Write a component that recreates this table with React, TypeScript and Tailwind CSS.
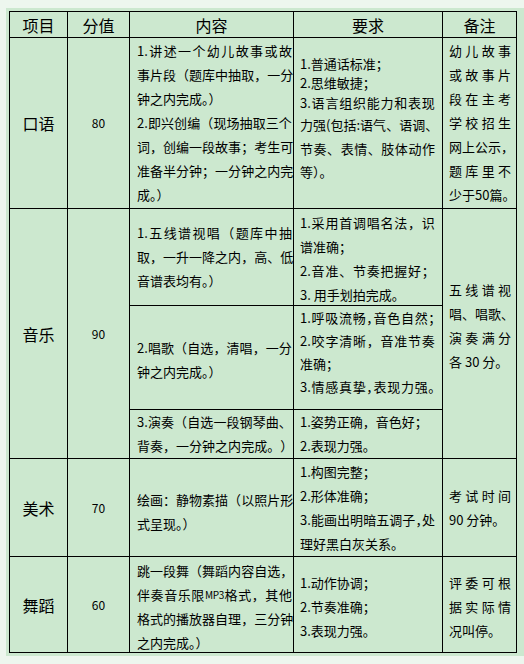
import React from 'react';

type Ln = { t: string; j?: boolean; h?: number };

const HC: Record<number, string> = {
  19: 'h-[19px] leading-[19px]',
  21: 'h-[21px] leading-[21px]',
  23: 'h-[23px] leading-[23px]',
  24: 'h-[24px] leading-[24px]',
};

const j = (t: string, h?: number): Ln => ({ t, j: true, h });
const n = (t: string, h?: number): Ln => ({ t, h });

function tokens(s: string): string[] {
  const out: string[] = [];
  let buf = '';
  for (const ch of Array.from(s)) {
    if (ch === ' ') {
      if (buf) {
        out.push(buf);
        buf = '';
      }
      continue;
    }
    if (/[0-9A-Za-z.]/.test(ch)) {
      buf += ch;
      continue;
    }
    if (buf) {
      out.push(buf);
      buf = '';
    }
    out.push(ch);
  }
  if (buf) out.push(buf);
  return out;
}

const PUNCT = /[，。；、：（）]/;

function est(s: string, halt: boolean): number {
  let w = 0;
  for (const ch of Array.from(s)) {
    if (ch === ' ') continue;
    if (/[0-9]/.test(ch)) w += 7.2;
    else if (/[A-Z]/.test(ch)) w += 6.5;
    else if (ch === '.') w += 3.5;
    else if (ch === '(' || ch === ':') w += 4;
    else if (halt && PUNCT.test(ch)) w += 6.5;
    else w += 13;
  }
  return w;
}

function Line({ ln, w }: { ln: Ln; w: number }) {
  const hc = HC[ln.h ?? 24];
  if (ln.j) {
    const halt = est(ln.t, false) > w + 3;
    const tight = halt && est(ln.t, true) > w;
    const fx = halt
      ? tight
        ? "[font-feature-settings:'halt'] tracking-[-0.6px]"
        : "[font-feature-settings:'halt']"
      : '';
    return (
      <div className={`flex justify-between whitespace-nowrap ${fx} ${hc}`}>
        {tokens(ln.t).map((tk, i) => (
          <span key={i} className={/[A-Z]/.test(tk) ? 'text-[10px] tracking-[-0.3px]' : ''}>
            {tk}
          </span>
        ))}
      </div>
    );
  }
  return <div className={`whitespace-pre ${hc}`}>{ln.t}</div>;
}

function Cell({ lines, cls, w }: { lines: Ln[]; cls: string; w: number }) {
  return (
    <div className={`border-l border-t border-black flex flex-col ${cls}`}>
      {lines.map((ln, i) => (
        <Line key={i} ln={ln} w={w} />
      ))}
    </div>
  );
}

function Head({ t }: { t: string }) {
  return (
    <div className="border-l border-t border-black flex items-center justify-center text-[16px]">{t}</div>
  );
}

function Label({ t, cls = '' }: { t: string; cls?: string }) {
  return (
    <div className={`border-l border-t border-black flex items-center justify-center text-[16px] ${cls}`}>{t}</div>
  );
}

function Score({ t, cls = '' }: { t: string; cls?: string }) {
  return (
    <div className={`border-l border-t border-black flex items-center justify-center text-[12px] ${cls}`}>{t}</div>
  );
}

const C3 = 'pl-[7px] pr-[1px]';
const C4 = 'pl-[6px] pr-[7px]';
const C5 = 'pl-[6px] pr-[5px]';
const W3 = 155;
const W4 = 135;
const W5 = 62;

export default function App() {
  return (
    <div className="w-[524px] h-[664px] bg-[#edf6ee] pt-[8px] pl-[6px] text-black font-['Noto_Sans_CJK_SC','Noto_Sans',sans-serif]">
      <div className="w-[518px] h-[648px] bg-[#cce8cf] p-[3px]">
        <div className="w-[508px] grid grid-cols-[58px_62px_164px_149px_74px] grid-rows-[26px_171px_97px_104px_49px_98px_96px] border-r border-b border-black text-[13px]">
          <Head t="项目" />
          <Head t="分值" />
          <Head t="内容" />
          <Head t="要求" />
          <Head t="备注" />

          {/* 口语 */}
          <Label t="口语" />
          <Score t="80" />
          <Cell
            w={W3}
            cls={`justify-center ${C3}`}
            lines={[
              j('1.讲述一个幼儿故事或故'),
              j('事片段（题库中抽取，一分'),
              n('钟之内完成。）'),
              j('2.即兴创编（现场抽取三个'),
              j('词，创编一段故事；考生可'),
              j('准备半分钟；一分钟之内完'),
              n('成。）'),
            ]}
          />
          <Cell
            w={W4}
            cls={`justify-start pt-[16px] ${C4}`}
            lines={[
              n('1.普通话标准；', 19),
              n('2.思维敏捷；', 19),
              j('3.语言组织能力和表现', 21),
              j('力强(包括:语气、语调、'),
              j('节奏、表情、肢体动作', 23),
              n('等）。', 23),
            ]}
          />
          <Cell
            w={W5}
            cls={`justify-center ${C5}`}
            lines={[
              j('幼儿故事'),
              j('或故事片'),
              j('段在主考'),
              j('学校招生'),
              n('网上公示，'),
              j('题库里不'),
              n('少于50篇。'),
            ]}
          />

          {/* 音乐 */}
          <Label t="音乐" cls="row-span-3" />
          <Score t="90" cls="row-span-3" />
          <Cell
            w={W3}
            cls={`justify-center ${C3}`}
            lines={[j('1.五线谱视唱（题库中抽'), j('取，一升一降之内，高、低'), n('音谱表均有。）')]}
          />
          <Cell
            w={W4}
            cls={`justify-center pt-[4px] ${C4}`}
            lines={[j('1. 采用首调唱名法，识'), n('谱准确；'), j('2. 音准、节奏把握好；'), n('3. 用手划拍完成。')]}
          />
          <Cell
            w={W5}
            cls={`row-span-3 justify-center pb-[16px] ${C5}`}
            lines={[j('五线谱视'), n('唱、唱歌、'), j('演奏满分'), n('各 30 分。')]}
          />
          <Cell
            w={W3}
            cls={`justify-center pt-[4px] ${C3}`}
            lines={[j('2.唱歌（自选，清唱，一分'), n('钟之内完成。）')]}
          />
          <Cell
            w={W4}
            cls={`justify-start ${C4}`}
            lines={[
              j('1. 呼吸流畅，音色自然；', 23),
              j('2. 咬字清晰，音准节奏', 23),
              n('准确；', 23),
              j('3. 情感真挚，表现力强。', 23),
            ]}
          />
          <Cell
            w={W3}
            cls={`justify-center ${C3}`}
            lines={[j('3.演奏（自选一段钢琴曲、'), j('背奏，一分钟之内完成。）')]}
          />
          <Cell w={W4} cls={`justify-center ${C4}`} lines={[n('1.姿势正确，音色好；'), n('2.表现力强。')]} />

          {/* 美术 */}
          <Label t="美术" />
          <Score t="70" />
          <Cell
            w={W3}
            cls={`justify-center pt-[8px] ${C3}`}
            lines={[j('绘画：静物素描（以照片形'), n('式呈现。）')]}
          />
          <Cell
            w={W4}
            cls={`justify-center ${C4}`}
            lines={[n('1.构图完整；'), n('2.形体准确；'), j('3.能画出明暗五调子，处'), n('理好黑白灰关系。')]}
          />
          <Cell w={W5} cls={`justify-center ${C5}`} lines={[j('考试时间'), n('90 分钟。')]} />

          {/* 舞蹈 */}
          <Label t="舞蹈" />
          <Score t="60" />
          <Cell
            w={W3}
            cls={`justify-center pt-[5px] ${C3}`}
            lines={[
              j('跳一段舞（舞蹈内容自选，'),
              j('伴奏音乐限 MP3 格式，其他'),
              j('格式的播放器自理，三分钟'),
              n('之内完成。）'),
            ]}
          />
          <Cell
            w={W4}
            cls={`justify-center pt-[4px] ${C4}`}
            lines={[n('1.动作协调；'), n('2.节奏准确；'), n('3.表现力强。')]}
          />
          <Cell
            w={W5}
            cls={`justify-center pt-[4px] ${C5}`}
            lines={[j('评委可根'), j('据实际情'), n('况叫停。')]}
          />
        </div>
      </div>
    </div>
  );
}
